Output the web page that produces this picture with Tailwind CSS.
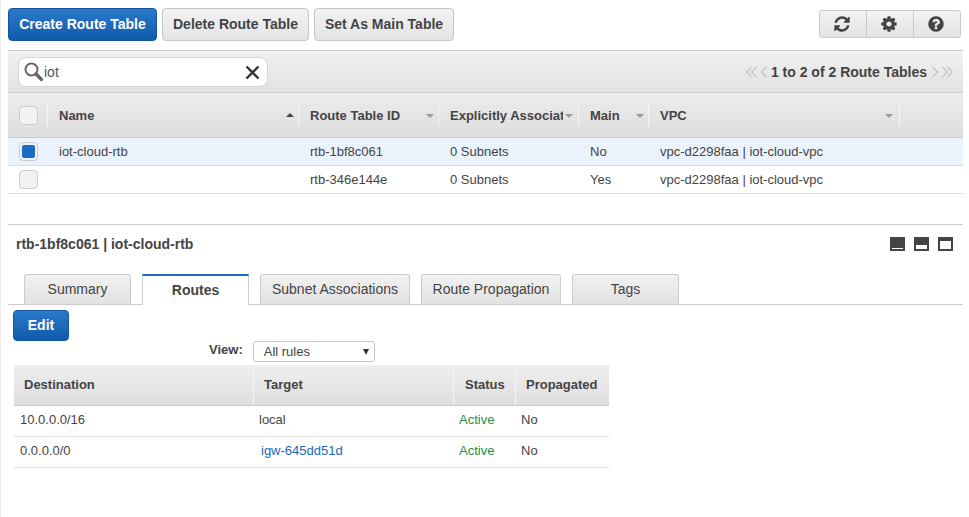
<!DOCTYPE html>
<html><head><meta charset="utf-8"><script src="https://cdn.jsdelivr.net/npm/@tailwindcss/browser@4"></script></head>
<body class="bg-white overflow-hidden">
<div class="h-[517px] w-[969px] overflow-hidden font-['Liberation_Sans',Arial,sans-serif] text-[13px] text-[#444] border-l border-[#eeeeee] pl-[7px] pr-[6px] pt-2">
  <!-- toolbar -->
  <div class="flex h-[34px] items-start text-[14px]">
    <button class="h-[33px] w-[149px] rounded-[4px] border border-[#15569c] bg-gradient-to-b from-[#2a79cb] to-[#0f5bab] font-bold text-white">Create Route Table</button>
    <button class="ml-[5px] h-[33px] w-[147px] rounded-[4px] border border-[#c6c6c6] bg-gradient-to-b from-[#f2f2f2] to-[#e4e4e4] font-bold">Delete Route Table</button>
    <button class="ml-[5px] h-[33px] w-[140px] rounded-[4px] border border-[#c6c6c6] bg-gradient-to-b from-[#f2f2f2] to-[#e4e4e4] font-bold">Set As Main Table</button>
    <div class="ml-auto mr-[2px] mt-[2px] flex h-[28px] w-[142px] rounded-[3px] border border-[#c9c9c9] bg-gradient-to-b from-[#f2f2f2] to-[#e4e4e4]">
      <div class="flex w-[47px] items-center justify-center border-r border-[#c9c9c9] pr-[2px]"><svg class="h-[18px] w-[18px] fill-[#444]" viewBox="0 0 1792 1792"><path d="M1639 1056q0 5-1 7-64 268-268 434.5t-478 166.5q-146 0-282.5-55t-243.5-157l-129 129q-19 19-45 19t-45-19-19-45v-448q0-26 19-45t45-19h448q26 0 45 19t19 45-19 45l-137 137q71 66 161 102t187 36q134 0 250-65t186-179q11-17 53-117 8-23 30-23h192q13 0 22.5 9.5t9.5 22.5zm25-800v448q0 26-19 45t-45 19h-448q-26 0-45-19t-19-45 19-45l138-138q-148-137-349-137-134 0-250 65t-186 179q-11 17-53 117-8 23-30 23h-199q-13 0-22.5-9.5t-9.5-22.5v-7q65-268 270-434.5t480-166.5q146 0 284 55.5t245 156.5l130-129q19-19 45-19t45 19 19 45z"/></svg></div>
      <div class="flex w-[47px] items-center justify-center border-r border-[#c9c9c9] pr-[2px]"><svg class="h-[18px] w-[18px] fill-[#444]" viewBox="0 0 1792 1792"><path d="M1152 896q0-106-75-181t-181-75-181 75-75 181 75 181 181 75 181-75 75-181zm512-109v222q0 12-8 23t-20 13l-185 28q-19 54-39 91 35 50 107 138 10 12 10 25t-9 23q-27 37-99 108t-94 71q-12 0-26-9l-138-108q-44 23-91 38-16 136-29 186-7 28-36 28h-222q-14 0-24.5-8.5t-11.5-21.5l-28-184q-49-16-90-37l-141 107q-10 9-25 9-14 0-25-11-126-114-165-168-7-10-7-23 0-12 8-23 15-21 51-66.5t54-70.5q-27-50-41-99l-183-27q-13-2-21-12.5t-8-23.5v-222q0-12 8-23t19-13l186-28q14-46 39-92-40-57-107-138-10-12-10-24 0-10 9-23 26-36 98.5-107.5t94.5-71.5q13 0 26 10l138 107q44-23 91-38 16-136 29-186 7-28 36-28h222q14 0 24.5 8.5t11.5 21.5l28 184q49 16 90 37l142-107q9-9 24-9 13 0 25 10 129 119 165 170 7 8 7 22 0 12-8 23-15 21-51 66.5t-54 70.5q26 50 41 98l183 28q13 2 21 12.5t8 23.5z"/></svg></div>
      <div class="flex flex-1 items-center justify-center pr-[2px]"><svg class="h-[18px] w-[18px] fill-[#444]" viewBox="0 0 1792 1792"><path d="M1024 1376v-192q0-14-9-23t-23-9h-192q-14 0-23 9t-9 23v192q0 14 9 23t23 9h192q14 0 23-9t9-23zm256-672q0-88-55.5-163t-138.5-116-170-41q-243 0-371 213-15 24 8 42l132 100q7 6 19 6 16 0 25-12 53-68 86-92 34-24 86-24 48 0 85.5 26t37.5 59q0 38-20 61t-68 45q-63 28-115.5 86.5t-52.5 125.5v36q0 14 9 23t23 9h192q14 0 23-9t9-23q0-19 21.5-49.5t54.5-49.5q32-18 49-28.5t46-35 44.5-48 28-60.5 12.5-81zm384 192q0 209-103 385.5t-279.5 279.5-385.5 103-385.5-103-279.5-279.5-103-385.5 103-385.5 279.5-279.5 385.5-103 385.5 103 279.5 279.5 103 385.5z"/></svg></div>
    </div>
  </div>
  <!-- filter bar -->
  <div class="mt-2 flex h-[43px] items-center border-y border-[#cccccc] bg-gradient-to-b from-[#f1f1f1] to-[#e2e2e2] pl-[10px] pr-[10px] text-[14px]">
    <div class="flex h-[30px] w-[250px] items-center rounded-[8px] border border-[#d5d5d5] bg-white pl-[5px] pr-[5px]">
      <svg class="h-[20px] w-[20px] shrink-0" viewBox="0 0 20 20" fill="none"><circle cx="7.5" cy="7.5" r="6" stroke="#666" stroke-width="2"/><path d="M12 12L17.5 17.5" stroke="#666" stroke-width="3.2" stroke-linecap="round"/></svg>
      <span class="mt-px flex-1 text-[#555]">iot</span>
      <svg class="mr-[2px] mt-px h-[15px] w-[15px]" viewBox="0 0 15 15"><path d="M1.5 1.5L13.5 13.5M13.5 1.5L1.5 13.5" stroke="#333" stroke-width="2.4"/></svg>
    </div>
    <div class="ml-auto mt-px flex items-center font-bold">
      <svg class="h-[12px] w-[11px]" viewBox="0 0 11 12" fill="none" stroke="#c4c4c4" stroke-width="1.3"><path d="M5.5 1L.8 6l4.7 5M10.5 1L5.8 6l4.7 5"/></svg>
      <svg class="ml-[3px] mr-[3px] h-[12px] w-[8px]" viewBox="0 0 8 12" fill="none" stroke="#c4c4c4" stroke-width="1.3"><path d="M6.5 1L1.5 6l5 5"/></svg>
      <span>1 to 2 of 2 Route Tables</span>
      <svg class="ml-[4px] mr-[3px] h-[12px] w-[8px]" viewBox="0 0 8 12" fill="none" stroke="#c4c4c4" stroke-width="1.3"><path d="M1.5 1l5 5-5 5"/></svg>
      <svg class="h-[12px] w-[11px]" viewBox="0 0 11 12" fill="none" stroke="#c4c4c4" stroke-width="1.3"><path d="M.5 1l4.7 5-4.7 5M5.5 1l4.7 5-4.7 5"/></svg>
    </div>
  </div>
  <!-- table header -->
  <div class="grid h-[45px] grid-cols-[40px_251px_140px_140px_70px_251px_1fr] items-center border-b border-[#cccccc] bg-gradient-to-b from-[#ececec] to-[#dedede] font-bold text-[14px]">
    <div class="flex h-[22px] items-center border-r border-[#f5f5f5] pl-[11px]"><span class="h-[19px] w-[19px] rounded-[4px] border border-[#ccc] bg-[#f2f2f2]"></span></div>
    <div class="relative flex h-[22px] items-center border-r border-[#f5f5f5] pl-[11px] pt-[2px] text-[13px]">Name<span class="absolute right-[4px] top-[9px] border-x-[4px] border-b-[4px] border-x-transparent border-b-[#444]"></span></div>
    <div class="relative flex h-[22px] items-center border-r border-[#f5f5f5] pl-[11px] pt-[2px] text-[13px]">Route Table ID<span class="absolute right-[4px] top-[10px] border-x-[4px] border-t-[4px] border-x-transparent border-t-[#999]"></span></div>
    <div class="relative flex h-[22px] items-center overflow-hidden whitespace-nowrap border-r border-[#f5f5f5] pl-[11px] pr-[15px] pt-[2px] text-[13px]"><span class="overflow-hidden">Explicitly Associated With</span><span class="absolute right-[5px] top-[10px] border-x-[4px] border-t-[4px] border-x-transparent border-t-[#999]"></span></div>
    <div class="relative flex h-[22px] items-center border-r border-[#f5f5f5] pl-[11px] pt-[2px] text-[13px]">Main<span class="absolute right-[4px] top-[10px] border-x-[4px] border-t-[4px] border-x-transparent border-t-[#999]"></span></div>
    <div class="relative flex h-[22px] items-center border-r border-[#f5f5f5] pl-[11px] pt-[2px] text-[13px]">VPC<span class="absolute right-[6px] top-[10px] border-x-[4px] border-t-[4px] border-x-transparent border-t-[#999]"></span></div>
    <div></div>
  </div>
  <!-- rows -->
  <div class="grid h-[28px] grid-cols-[40px_251px_140px_140px_70px_1fr] items-center border-b border-[#dddddd] bg-[#eaf3fc]">
    <div class="pl-[11px]"><span class="flex h-[19px] w-[19px] items-center justify-center rounded-[4px] border border-[#ccc] bg-[#f2f2f2]"><span class="h-[13px] w-[13px] rounded-[2px] bg-[#1b6cc4]"></span></span></div>
    <div class="pl-[11px]">iot-cloud-rtb</div><div class="pl-[11px]">rtb-1bf8c061</div><div class="pl-[11px]">0 Subnets</div><div class="pl-[11px]">No</div><div class="pl-[11px]">vpc-d2298faa | iot-cloud-vpc</div>
  </div>
  <div class="grid h-[28px] grid-cols-[40px_251px_140px_140px_70px_1fr] items-center border-b border-[#dddddd]">
    <div class="pl-[11px]"><span class="block h-[19px] w-[19px] rounded-[4px] border border-[#ccc] bg-[#f2f2f2]"></span></div>
    <div></div><div class="pl-[11px]">rtb-346e144e</div><div class="pl-[11px]">0 Subnets</div><div class="pl-[11px]">Yes</div><div class="pl-[11px]">vpc-d2298faa | iot-cloud-vpc</div>
  </div>
  <!-- detail -->
  <div class="mt-[30px] flex h-[50px] items-start border-t border-[#cccccc] pt-[11px]">
    <span class="pl-2 text-[14px] leading-[16px] font-bold">rtb-1bf8c061 | iot-cloud-rtb</span>
    <div class="ml-auto mr-[10px] mt-px flex gap-[9px]">
      <span class="flex h-[14px] w-[15px] items-end justify-center bg-[#444] pb-[2px]"><span class="h-[1px] w-[11px] bg-white"></span></span>
      <span class="flex h-[14px] w-[15px] items-end justify-center bg-[#444] pb-[2px]"><span class="h-[4px] w-[11px] bg-white"></span></span>
      <span class="flex h-[14px] w-[15px] items-end justify-center bg-[#444] pb-[2px]"><span class="h-[8px] w-[11px] bg-white"></span></span>
    </div>
  </div>
  <!-- tabs -->
  <div class="flex h-[31px] items-stretch gap-[11px] border-b border-[#cccccc] pl-[16px] text-[14px]">
    <div class="flex h-[30px] w-[107px] items-center justify-center rounded-t-[3px] border border-b-0 border-[#cccccc] bg-gradient-to-b from-[#f1f1f1] to-[#e2e2e2]">Summary</div>
    <div class="z-10 flex h-[31px] w-[107px] items-center justify-center border-x border-[#cccccc] border-t-2 border-t-[#1b6cc4] bg-white font-bold">Routes</div>
    <div class="flex h-[30px] w-[150px] items-center justify-center rounded-t-[3px] border border-b-0 border-[#cccccc] bg-gradient-to-b from-[#f1f1f1] to-[#e2e2e2]">Subnet Associations</div>
    <div class="flex h-[30px] w-[140px] items-center justify-center rounded-t-[3px] border border-b-0 border-[#cccccc] bg-gradient-to-b from-[#f1f1f1] to-[#e2e2e2]">Route Propagation</div>
    <div class="flex h-[30px] w-[107px] items-center justify-center rounded-t-[3px] border border-b-0 border-[#cccccc] bg-gradient-to-b from-[#f1f1f1] to-[#e2e2e2]">Tags</div>
  </div>
  <!-- edit -->
  <div class="pl-[5px] pt-[5px]">
    <button class="block h-[31px] w-[56px] rounded-[4px] border border-[#15569c] bg-gradient-to-b from-[#2a79cb] to-[#0f5bab] text-[14px] font-bold text-white">Edit</button>
    <div class="flex h-[24px] items-start">
      <span class="ml-[196px] text-[13px] leading-[18px] font-bold">View:</span>
      <div class="relative ml-[10px] h-[21px] w-[122px] rounded-[3px] border border-[#c6c6c6] bg-white pl-[10px] text-[13px] leading-[20px]">All rules<span class="absolute right-[5px] top-[7px] border-x-[3.5px] border-t-[6px] border-x-transparent border-t-[#333]"></span></div>
    </div>
    <div class="ml-px w-[595px]">
      <div class="grid h-[41px] grid-cols-[240px_200px_62px_1fr] items-center border-b border-[#cccccc] bg-gradient-to-b from-[#efefef] to-[#dedede] font-bold">
        <div class="flex h-full items-center border-r border-[#f5f5f5] pl-[10px]">Destination</div>
        <div class="flex h-full items-center border-r border-[#f5f5f5] pl-[10px]">Target</div>
        <div class="flex h-full items-center border-r border-[#f5f5f5] pl-[11px]">Status</div>
        <div class="flex h-full items-center pl-[10px]">Propagated</div>
      </div>
      <div class="grid h-[31px] grid-cols-[240px_200px_62px_1fr] items-center border-b border-[#dddddd] pb-[2px]">
        <div class="pl-[6px]">10.0.0.0/16</div><div class="pl-[5px]">local</div><div class="pl-[5px] text-[#1d8f3c]">Active</div><div class="pl-[5px]">No</div>
      </div>
      <div class="grid h-[31px] grid-cols-[240px_200px_62px_1fr] items-center border-b border-[#dddddd] pb-[2px]">
        <div class="pl-[6px]">0.0.0.0/0</div><div class="pl-[7px] text-[#1b66b8]">igw-645dd51d</div><div class="pl-[5px] text-[#1d8f3c]">Active</div><div class="pl-[5px]">No</div>
      </div>
    </div>
  </div>
</div>
</body></html>
